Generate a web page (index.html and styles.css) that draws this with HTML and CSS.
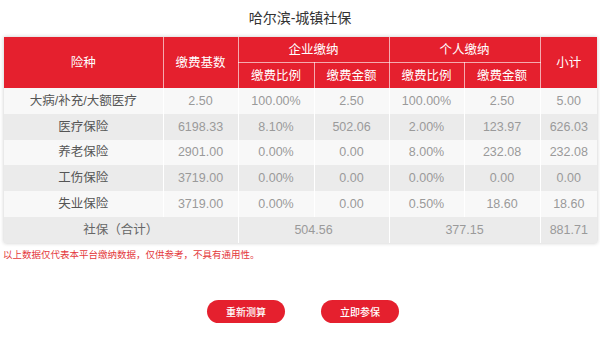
FILE: index.html
```html
<!DOCTYPE html>
<html lang="zh-CN">
<head>
<meta charset="utf-8">
<title>哈尔滨-城镇社保</title>
<link rel="stylesheet" href="styles.css">
</head>
<body>
<h1 class="title">哈尔滨-城镇社保</h1>
<div class="wrap">
  <table class="rates">
    <colgroup>
      <col class="c1"><col class="c2"><col class="c3"><col class="c4"><col class="c5"><col class="c6"><col class="c7">
    </colgroup>
    <thead>
      <tr class="h1">
        <th rowspan="2">险种</th>
        <th rowspan="2">缴费基数</th>
        <th colspan="2" class="group">企业缴纳</th>
        <th colspan="2" class="group">个人缴纳</th>
        <th rowspan="2" class="last">小计</th>
      </tr>
      <tr class="h2">
        <th>缴费比例</th>
        <th>缴费金额</th>
        <th>缴费比例</th>
        <th>缴费金额</th>
      </tr>
    </thead>
    <tbody>
      <tr class="light">
        <td class="name">大病/补充/大额医疗</td><td>2.50</td><td>100.00%</td><td>2.50</td><td>100.00%</td><td>2.50</td><td class="last">5.00</td>
      </tr>
      <tr class="dark">
        <td class="name">医疗保险</td><td>6198.33</td><td>8.10%</td><td>502.06</td><td>2.00%</td><td>123.97</td><td class="last">626.03</td>
      </tr>
      <tr class="light">
        <td class="name">养老保险</td><td>2901.00</td><td>0.00%</td><td>0.00</td><td>8.00%</td><td>232.08</td><td class="last">232.08</td>
      </tr>
      <tr class="dark">
        <td class="name">工伤保险</td><td>3719.00</td><td>0.00%</td><td>0.00</td><td>0.00%</td><td>0.00</td><td class="last">0.00</td>
      </tr>
      <tr class="light">
        <td class="name">失业保险</td><td>3719.00</td><td>0.00%</td><td>0.00</td><td>0.50%</td><td>18.60</td><td class="last">18.60</td>
      </tr>
      <tr class="dark total">
        <td colspan="2" class="total-label">社保（合计）</td>
        <td colspan="2">504.56</td>
        <td colspan="2">377.15</td>
        <td class="last">881.71</td>
      </tr>
    </tbody>
  </table>
  <p class="note">以上数据仅代表本平台缴纳数据，仅供参考，不具有通用性。</p>
</div>
<div class="actions">
  <button class="btn" type="button">重新测算</button>
  <button class="btn" type="button">立即参保</button>
</div>
</body>
</html>
```
FILE: styles.css
```css
html, body {
  margin: 0;
  padding: 0;
  background: #ffffff;
}
body {
  font-family: "Liberation Sans", "Noto Sans CJK SC", sans-serif;
  color: #333;
}
.title {
  margin: 0;
  height: 37px;
  line-height: 37px;
  text-align: center;
  font-size: 14px;
  font-weight: normal;
  color: #333333;
}
.wrap {
  padding: 0 3px 0 4px;
}
.rates {
  width: 593px;
  border-collapse: collapse;
  border-spacing: 0;
  table-layout: fixed;
  box-shadow: 0 0 4px rgba(0, 0, 0, 0.22);
  font-size: 12.5px;
}
.c1 { width: 159px; }
.c2 { width: 75px; }
.c3 { width: 76px; }
.c4 { width: 75px; }
.c5 { width: 75px; }
.c6 { width: 76px; }
.c7 { width: 57px; }
.rates th {
  background: #e5202e;
  color: #ffffff;
  font-weight: normal;
  padding: 0;
  height: 25px;
  line-height: 16px;
  text-align: center;
  border-right: 1px solid rgba(255, 255, 255, 0.62);
}
.rates th.last,
.rates td.last {
  border-right: none;
}
.rates th.group {
  border-bottom: 1px solid rgba(255, 255, 255, 0.62);
}
.rates td {
  padding: 0;
  height: 25.8px;
  line-height: 16px;
  text-align: center;
  color: #9a9a9a;
  border-right: 1px solid #ffffff;
}
.rates tr.light td {
  background: #f8f8f8;
}
.rates tr.dark td {
  background: #ebebeb;
}
.rates td.name {
  color: #555555;
}
.rates td.total-label {
  color: #666666;
}
.note {
  margin: 6px 0 0 -1px;
  font-size: 9.5px;
  line-height: 11px;
  color: #e4393c;
}
.actions {
  display: flex;
  justify-content: center;
  gap: 36px;
  margin-top: 40px;
  padding-left: 6px;
}
.btn {
  width: 78px;
  height: 23px;
  border: none;
  border-radius: 12px;
  background: #e5202e;
  color: #ffffff;
  font-family: "Liberation Sans", "Noto Sans CJK SC", sans-serif;
  font-size: 10px;
  font-weight: 500;
  padding: 0;
  display: flex;
  align-items: center;
  justify-content: center;
}
```
